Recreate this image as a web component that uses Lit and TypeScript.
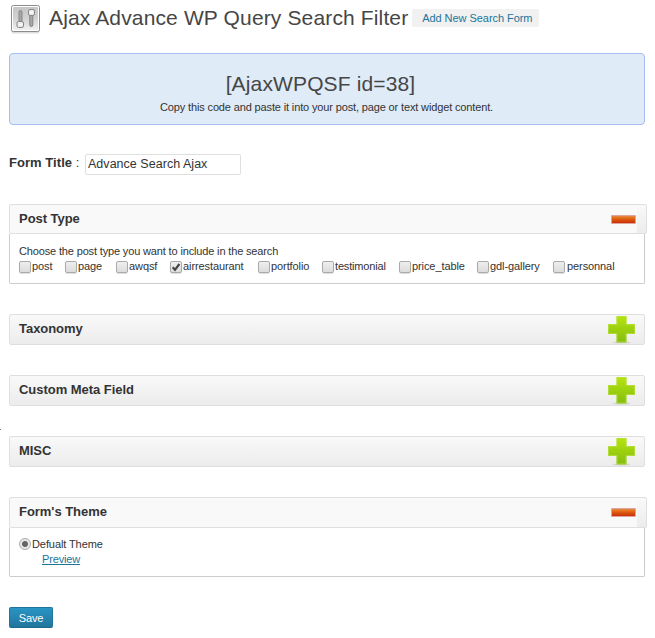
import { LitElement, html, svg, css } from "lit";
import { customElement, property } from "lit/decorators.js";
import { classMap } from "lit/directives/class-map.js";

@customElement("settings-icon")
class SettingsIcon extends LitElement {
  static styles = css`:host, svg { display: block; }`;
  render() {
    return html`<svg width="30" height="29" viewBox="0 0 30 29">
      <defs>
        <linearGradient id="g" x2="0" y2="1">
          <stop offset="0" stop-color="#c6c6c6" /><stop offset=".5" stop-color="#d2d2d2" /><stop offset="1" stop-color="#f0f0f0" />
        </linearGradient>
      </defs>
      <rect x="1.5" y="1" width="28" height="27.4" rx="2" fill="#ddd" />
      <rect x="1.5" y=".5" width="28" height="26" rx="1.8" fill="#fff" stroke="#8c8c8c" />
      <rect x="3" y="2" width="25" height="23" rx="1" fill="url(#g)" />
      <g stroke="#858585" stroke-width="1" fill="#a8a8a8">
        <rect x="9" y="5.5" width="3" height="12" rx="1.5" />
        <rect x="19.8" y="9" width="3" height="12.5" rx="1.5" />
        <rect x="7" y="16.5" width="6.5" height="6" rx="1.6" fill="#ececec" />
        <rect x="18.5" y="4.5" width="6" height="6" rx="1.6" fill="#ececec" />
      </g>
      <path d="M9 19.5h3M20 7.5h3" stroke="#fff" />
    </svg>`;
  }
}

@customElement("toggle-icon")
class ToggleIcon extends LitElement {
  @property({ type: Boolean }) open = false;
  static styles = css`:host, svg { display: block; }`;
  render() {
    const minus = svg`
      <rect x="3" y="10" width="25" height="9" rx="1" fill="#dfa49a" />
      <rect x="4" y="11" width="23" height="7" fill="url(#r)" />
      <path d="M4 11.5h23" stroke="#e2843b" />`;
    const plus = svg`
      <ellipse cx="13.5" cy="27.5" rx="9" ry="1" fill="#ccc" fill-opacity=".7" />
      <path d="M8.500 1h10v8h8.500v10h-8.500v8.500h-10v-8.500H0V9h8.500z" fill="url(#p)" />
      <path d="M9 1.500h9v8h8.500v9H18v8.500H9v-8.500H.5v-9H9z" fill="none" stroke="#b9de4a" stroke-opacity=".75" />`;
    return html`<svg width="28" height="29" viewBox="0 0 28 29">
      <defs>
        <linearGradient id="r" x2="0" y2="1">
          <stop offset="0" stop-color="#ee8b2c" /><stop offset=".5" stop-color="#dc5710" /><stop offset="1" stop-color="#c83108" />
        </linearGradient>
        <linearGradient id="p" x2="0" y2="1">
          <stop offset="0" stop-color="#b5e50e" /><stop offset="1" stop-color="#84bc10" />
        </linearGradient>
      </defs>
      ${this.open ? minus : plus}
    </svg>`;
  }
}

@customElement("option-panel")
class OptionPanel extends LitElement {
  @property() heading = "";
  @property({ type: Boolean }) open = false;
  @property({ type: Boolean }) first = false;
  static styles = css`
    :host { display: block; width: 636px; margin-bottom: 30px; }
    .head {
      box-sizing: border-box; height: 31px; display: flex; align-items: center; justify-content: space-between;
      border: 1px solid #dfdfdf; border-radius: 2px; padding: 0 8px 0 9px; overflow: hidden;
      background: linear-gradient(#f9f9f9, #ececec);
    }
    .open { width: 638px; padding-right: 10px; background: linear-gradient(90deg, #f9f9f9 627px, transparent 627px), linear-gradient(#f9f9f9, #ececec); }
    .first { height: 30px; }
    .title { font-weight: bold; font-size: 13px; line-height: 20px; color: #333; margin-top: -1px; white-space: pre; letter-spacing: -0.04px; }
    .first .title { margin-top: 0; }
    .body { box-sizing: border-box; border: 1px solid #ccc; border-top: 0; border-radius: 0 0 2px 2px; padding: 9px; height: 49px; }
    .first + .body { height: 50px; padding-top: 10px; }
  `;
  render() {
    return html`
      <div class=${classMap({ head: true, open: this.open, first: this.first })}>
        <span class="title">${this.heading}</span>
        <toggle-icon ?open=${this.open}></toggle-icon>
      </div>
      ${this.open ? html`<div class="body"><slot></slot></div>` : ""}
    `;
  }
}

@customElement("app-root")
class AppRoot extends LitElement {
  static styles = css`
    :host {
      display: block; position: relative; box-sizing: border-box; width: 655px; height: 638px; padding: 5px 9px 0;
      overflow: hidden; background: #fff; font-family: "Liberation Sans", Arial, sans-serif; font-size: 11px; color: #333;
    }
    .header { display: flex; height: 48px; padding-left: 1px; }
    .name { font-size: 21px; line-height: 26px; color: #464646; margin-left: 9px; white-space: nowrap; letter-spacing: 0.14px; }
    .add { height: 18px; width: 127px; box-sizing: border-box; text-align: center; line-height: 18px; padding-left: 3px; margin: 4px 0 0 4px; background: #f1f1f1; color: #21759b; border-radius: 2px; white-space: nowrap; letter-spacing: -0.05px; }
    .code { box-sizing: border-box; width: 636px; height: 72px; border: 1px solid #a8bef2; border-radius: 4px; background: #dfebf7; text-align: center; padding: 16px 0 0; }
    .short { font-size: 21px; line-height: 28px; color: #464646; letter-spacing: 0.14px; padding-right: 13px; }
    .hint { line-height: 14px; margin-top: 2px; letter-spacing: -0.14px; padding-right: 1px; }
    .form { display: flex; margin: 29px 0; height: 21px; }
    .label { font-size: 13px; line-height: 17px; width: 76px; white-space: nowrap; letter-spacing: 0.05px; }
    .field { box-sizing: border-box; width: 156px; height: 21px; border: 1px solid #dfdfdf; border-radius: 2px; font: 12.5px/17px "Liberation Sans", sans-serif; padding: 0 2px 2px; color: #333; outline: 0; letter-spacing: 0.03px; }
    .line { line-height: 15px; letter-spacing: -0.15px; }
    .checks { display: grid; grid-template-columns: 46px 51px 54px 88px 64px 77px 78px 76px 66px; height: 15px; }
    .item { display: flex; line-height: 15px; white-space: nowrap; letter-spacing: -0.09px; }
    .checks .item:nth-child(6) { letter-spacing: -0.17px; }
    .box { flex: none; box-sizing: border-box; width: 12px; height: 12px; margin: 2px 1px 0 0; border: 1px solid #aaa; border-radius: 2px; background: linear-gradient(#eee, #dcdcdc); box-shadow: 0 1px 1px #ddd; }
    .item:last-child .box { margin-right: 2px; }
    .box svg { display: block; }
    .radio { flex: none; box-sizing: border-box; width: 12px; height: 12px; border: 1px solid #aaa; border-radius: 50%; margin: 1px 1px 0 0; background: radial-gradient(circle, #666 2.6px, #e9e9e9 3.4px); }
    .link { display: inline-block; margin-left: 23px; line-height: 15px; color: #21759b; letter-spacing: -0.15px; }
    .save { box-sizing: border-box; width: 44px; height: 21px; padding: 1px 0 0; border: 1px solid #21759b; border-bottom-color: #1e6a8d; border-radius: 2px; background: linear-gradient(#2a95c5, #21759b); color: #fff; font: 11px/18px "Liberation Sans", sans-serif; display: block; letter-spacing: -0.1px; }
    .speck { position: absolute; left: 0; top: 429px; width: 1px; height: 1px; background: #777; }
  `;
  types = ["post", "page", "awqsf", "airrestaurant", "portfolio", "testimonial", "price_table", "gdl-gallery", "personnal"];
  render() {
    return html`
      <div class="header">
        <settings-icon></settings-icon>
        <div class="name">Ajax Advance WP Query Search Filter</div>
        <div class="add">Add New Search Form</div>
      </div>
      <div class="code">
        <div class="short">[AjaxWPQSF id=38]</div>
        <div class="hint">Copy this code and paste it into your post, page or text widget content.</div>
      </div>
      <div class="form">
        <div class="label"><b>Form Title</b> :</div>
        <input class="field" value="Advance Search Ajax" />
      </div>
      <option-panel heading="Post Type" open first>
        <div class="line">Choose the post type you want to include in the search</div>
        <div class="checks">
          ${this.types.map((t) => html`<div class="item"><span class="box">${t === "airrestaurant"
            ? html`<svg width="10" height="10" viewBox="0 0 10 10"><path d="M1.7 5.2l2.3 2.6L8.4 2" fill="none" stroke="#444" stroke-width="2.2" /></svg>`
            : ""}</span>${t}</div>`)}
        </div>
      </option-panel>
      <option-panel heading="Taxonomy"></option-panel>
      <option-panel heading="Custom Meta Field"></option-panel>
      <option-panel heading="MISC"></option-panel>
      <option-panel heading="Form's Theme" open>
        <div class="item"><span class="radio"></span>Defualt Theme</div>
        <a class="link" href="#">Preview</a>
      </option-panel>
      <button class="save">Save</button>
      <span class="speck"></span>
    `;
  }
}
